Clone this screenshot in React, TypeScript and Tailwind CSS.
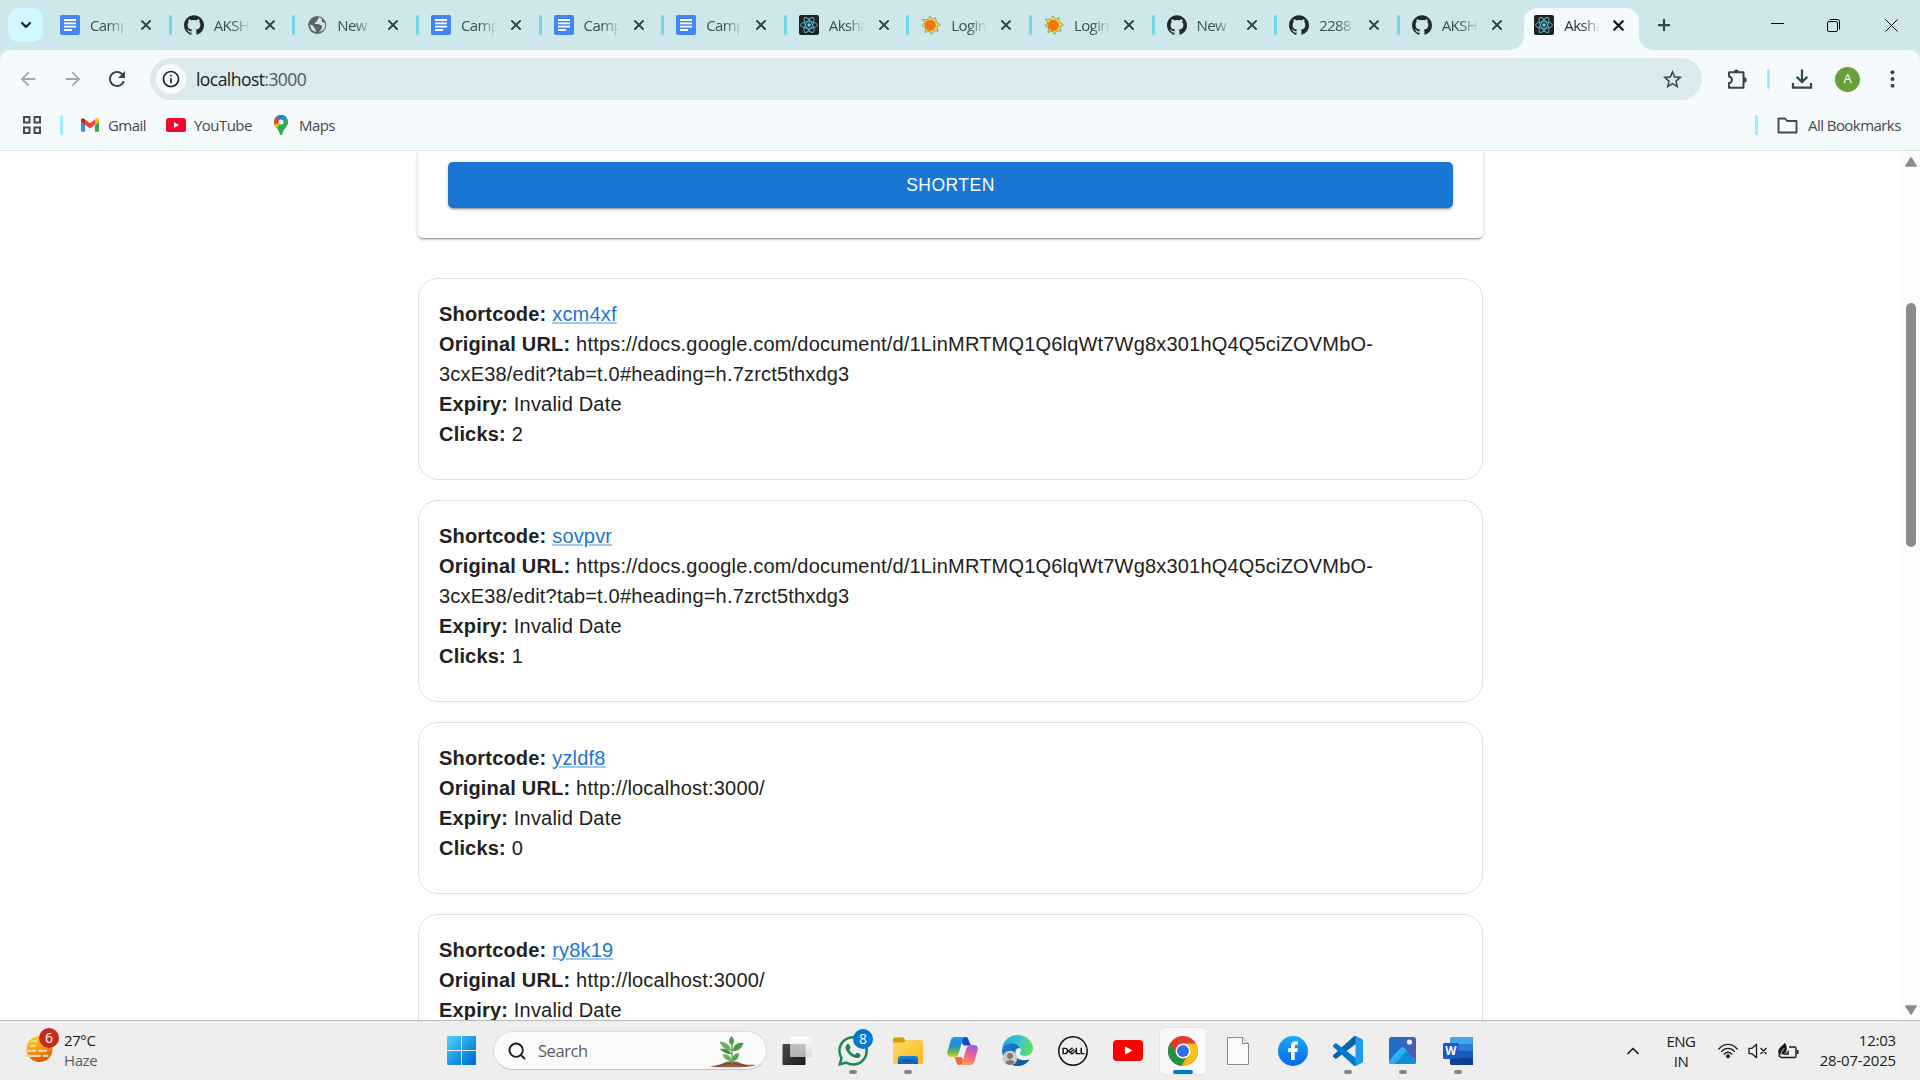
import React from "react";
import { SiGithub, SiDell, SiWhatsapp } from "react-icons/si";
import { MdRefresh, MdInfoOutline, MdStarBorder, MdArrowBack, MdArrowForward } from "react-icons/md";
import { ChevronDown, ChevronUp, X, Plus, Search } from "lucide-react";

/* ---------- favicons ---------- */

const DocsIcon = () => (
  <svg width="20" height="20" viewBox="0 0 20 20">
    <rect width="20" height="20" rx="2" fill="#4285f4" />
    <path d="M4 5h12M4 8.3h12M4 11.7h12M4 15h8" stroke="#fff" strokeWidth="1.8" />
  </svg>
);

const GithubIcon = () => <SiGithub size={20} color="#24292f" />;

const GlobeIcon = () => (
  <svg width="20" height="20" viewBox="0 0 20 20" className="ml-px mr-[-1px]">
    <circle cx="9.2" cy="10" r="9" fill="#5f6368" />
    <path
      d="M10.5 2.3c-.8 1.4.3 1.9-.9 2.6-1 .6-.3 1.6-1.5 2-1.4.4-1.8 1.300-.6 2 1.200.6 2.600-.4 3.900.7 1.100.9 2.400.3 2.800 1.700.3 1.200-.8 1.500-1 2.700-.2 1.300-1.400 2.400-2.900 2.900 4-.2 6.800-3.400 6.800-7 0-1-.200-1.900-.600-2.700-1.100.7-2.300.4-2.700-.600-.3-.9.6-1.300.2-2.200-.6-1.200-2-1.900-3.500-2.100zM2.100 9.700c0 3.600 2.500 6.600 6 7.200.3-1.400-.9-1.700-1-3-.1-1.300-1.400-1.100-1.600-2.400-.2-1-1.900-1.300-3.400-1.800z"
      fill="#d6e8ea"
    />
  </svg>
);

const ReactIcon = () => (
  <svg width="20" height="20" viewBox="0 0 20 20">
    <rect width="20" height="20" rx="2" fill="#222" />
    <g fill="none" stroke="#53c1de" strokeWidth="0.9">
      <ellipse cx="10" cy="10" rx="8.400" ry="3.300" />
      <ellipse cx="10" cy="10" rx="8.400" ry="3.300" transform="rotate(60 10 10)" />
      <ellipse cx="10" cy="10" rx="8.400" ry="3.300" transform="rotate(120 10 10)" />
    </g>
    <circle cx="10" cy="10" r="1.700" fill="#61dafb" />
  </svg>
);

const SunIcon = () => (
  <svg width="20" height="20" viewBox="0 0 20 20">
    <path
      d="M9 1l2.200 3.200L14.800 2.700l.2 4 4.300 3.100-3.500 1.900 1.300 4.300-4-.2-2.700 3.500-1.900-3.400-4.600 1.700.9-4.600L.7 10.500l3.400-2.300L1.500 4.300l4.800.5z"
      fill="#f9dc48"
      stroke="#7d7f58"
      strokeWidth=".7"
      strokeLinejoin="round"
    />
    <circle cx="9.300" cy="10.300" r="5.300" fill="#ee7614" stroke="#d4730f" strokeWidth=".5" />
  </svg>
);

/* ---------- toolbar icons ---------- */

const PuzzleIcon = () => (
  <svg width="22" height="22" viewBox="0 0 22 22" fill="none">
    <path
      d="M3 4.200h14.500v15.600H3v-4.800c3.800-.4 3.800-6.200 0-6.600z"
      stroke="#2f4a52"
      strokeWidth="2"
      strokeLinejoin="round"
    />
    <path d="M7.700 4a2.600 2.600 0 015.200 0zM18 9.200a2.700 2.700 0 010 5.400z" fill="#2f4a52" />
  </svg>
);

const DownloadIcon = () => (
  <svg width="22" height="22" viewBox="0 0 22 22" fill="none" stroke="#2f4a52" strokeWidth="2.300">
    <path d="M11 1.500v12M5.700 8.700l5.300 5.300 5.300-5.300M2 15v4.600h18V15" />
  </svg>
);

const AppsIcon = () => (
  <svg width="18" height="18" viewBox="0 0 18 18" fill="none" stroke="#474747" strokeWidth="2">
    <path d="M1 1h5.500v5.500H1zM11.500 1H17v5.500h-5.500zM1 11.500h5.500V17H1zM11.500 11.500H17V17h-5.500z" />
  </svg>
);

const GmailIcon = () => (
  <svg width="18" height="14" viewBox="52 42 88 66">
    <path fill="#4285f4" d="M58 108h14V74L52 59v43c0 3.320 2.690 6 6 6" />
    <path fill="#34a853" d="M120 108h14c3.320 0 6-2.690 6-6V59l-20 15" />
    <path fill="#fbbc04" d="M120 48v26l20-15v-8c0-7.420-8.470-11.650-14.400-7.200" />
    <path fill="#ea4335" d="M72 74V48l24 18 24-18v26L96 92" />
    <path fill="#c5221f" d="M52 51v8l20 15V48l-5.600-4.200c-5.940-4.450-14.400-.22-14.400 7.200" />
  </svg>
);

const YoutubeIcon = ({ w, color }: { w: number; color: string }) => (
  <svg width={w} height={w * 0.7} viewBox="0 0 20 14">
    <rect width="20" height="14" rx="2.600" fill={color} />
    <path d="M8 4.200v5.600l5-2.800z" fill="#fff" />
  </svg>
);

const MapsIcon = () => (
  <svg width="14" height="20" viewBox="0 0 14 20">
    <defs>
      <clipPath id="pin">
        <path d="M7 0a7 7 0 017 7c0 4.500-4.500 6-5.800 11.500C8 19.500 7.600 20 7 20s-1-.5-1.200-1.500C4.500 13 0 11.500 0 7a7 7 0 017-7z" />
      </clipPath>
    </defs>
    <g clipPath="url(#pin)">
      <path d="M0 0h14v20H0z" fill="#34a853" />
      <path d="M0 14L13 0 0-2z" fill="#ea4335" />
      <path d="M2 2L7 7l7-6V-1H3z" fill="#4285f4" />
      <path d="M7 7l6.500-5.500L14 5 2.500 15 0 10z" fill="#fbbc04" />
      <path d="M7 7l7-6v20H7L3 13z" fill="#34a853" />
      <path d="M7 7L2 2l3-3h6l2 3z" fill="#2f7de9" />
    </g>
    <circle cx="7" cy="7" r="2.500" fill="#fff" />
  </svg>
);

const FolderOutline = () => (
  <svg width="21" height="17" viewBox="0 0 21 17" fill="none" stroke="#474747" strokeWidth="1.900" strokeLinejoin="round">
    <path d="M1.500 1.500H8l2 2.500h9.500v11.500h-18z" />
  </svg>
);

/* ---------- taskbar icons ---------- */

const WeatherIcon = () => (
  <svg width="30" height="28" viewBox="0 0 30 28">
    <defs>
      <linearGradient id="haze" x1="0" y1="0" x2="0.300" y2="1">
        <stop offset="0" stopColor="#fde00a" />
        <stop offset=".45" stopColor="#fbab12" />
        <stop offset="1" stopColor="#e4570c" />
      </linearGradient>
    </defs>
    <circle cx="15.500" cy="14" r="13" fill="url(#haze)" />
    <g stroke="#e6d6a8" strokeWidth="2.200" strokeLinecap="round">
      <path d="M8 6h4M7 11h4M2 15.800h9M15 15.800h7M2 20.800h14M19.500 20.800h4" />
    </g>
  </svg>
);

const WindowsIcon = () => (
  <svg width="29" height="29" viewBox="0 0 29 29">
    <defs>
      <linearGradient id="win" x1="0" y1="0" x2="1" y2="1">
        <stop offset="0" stopColor="#4fd5ff" />
        <stop offset=".6" stopColor="#1390e0" />
        <stop offset="1" stopColor="#0069cf" />
      </linearGradient>
    </defs>
    <path
      d="M1 0h13v14H0V1a1 1 0 011-1zM15 0h13a1 1 0 011 1v13H15zM0 15h14v14H1a1 1 0 01-1-1zM15 15h14v13a1 1 0 01-1 1H15z"
      fill="url(#win)"
    />
  </svg>
);

const PlantIcon = () => (
  <svg width="46" height="32" viewBox="0 0 46 32">
    <path d="M0 30.500c5-1 9-1.200 13-3.200 3-1.800 6-2 9-2 4 0 7 .8 10 2.500 4 1.200 9 1 14 1.200-6 2-12 2.300-22 2.300-9 0-17 .2-24-.8z" fill="#9a6047" />
    <path d="M7 30c6-.8 8-2.500 14-2.500 7 0 10 2 16 2.200" fill="none" stroke="#6e3d2a" strokeWidth="1" />
    <path d="M22 28V6" stroke="#55a24c" strokeWidth="1.400" fill="none" />
    <g fill="#4fa24c">
      <path d="M21.500 9c-4-2.500-2.500-6 0-9 3 3 4 6.500 0 9z" />
      <path d="M21.500 15C17 15 12 11.500 9.500 5.500c6 .5 10.500 3 12 9.500z" fill="#66b55c" />
      <path d="M22.500 15c1-6 5-9 11-8-2 6-6 8.500-11 8z" fill="#4a9a49" />
      <path d="M21.500 18C17 18.500 13 16 10 13c5-1 9 .5 11.500 5z" fill="#3f8f42" />
      <path d="M21.500 25c-4.500 0-7.500-2.500-9-6.500 5-1 8.500 1.500 9 6.500z" fill="#66b55c" />
      <path d="M22.500 25c-.5-5 2-7.500 6.500-8 0 4.500-2 7.500-6.500 8z" fill="#51a54e" />
    </g>
  </svg>
);

const TaskViewIcon = () => (
  <svg width="31" height="28" viewBox="0 0 31 28">
    <defs>
      <linearGradient id="tv1" x1="0" y1="0" x2="1" y2="1">
        <stop offset="0" stopColor="#4b4b4b" />
        <stop offset="1" stopColor="#1b1b1b" />
      </linearGradient>
      <linearGradient id="tv2" x1="0" y1="0" x2="0" y2="1">
        <stop offset="0" stopColor="#fff" />
        <stop offset="1" stopColor="#d9d9d9" />
      </linearGradient>
    </defs>
    <rect x="0.500" y="7" width="23" height="21" rx="1" fill="url(#tv1)" />
    <rect x="8" y="0" width="22" height="20" rx="1" fill="url(#tv2)" opacity=".93" />
    <path d="M8 7h15.500v13H8z" fill="#888" opacity=".4" />
  </svg>
);

const FolderIcon = () => (
  <svg width="30" height="28" viewBox="0 0 30 28">
    <defs>
      <linearGradient id="fold" x1="0" y1="0" x2="1" y2="1">
        <stop offset="0" stopColor="#ffdc68" />
        <stop offset="1" stopColor="#fcb716" />
      </linearGradient>
      <linearGradient id="fold2" x1="0" y1="0" x2="0" y2="1">
        <stop offset="0" stopColor="#1a86dc" />
        <stop offset="1" stopColor="#0b62b5" />
      </linearGradient>
    </defs>
    <path d="M0 2a1.500 1.500 0 011.500-1.500H10l3 3H29v6H0z" fill="#dc9b04" />
    <path d="M0 5.500h10.500L13 3.500h16a1 1 0 011 1V27H0z" fill="url(#fold)" />
    <path d="M5 27v-5a3 3 0 013-3h14a3 3 0 013 3v5z" fill="url(#fold2)" />
    <path d="M9 23.500h12" stroke="#0b4f94" strokeWidth="1.400" />
  </svg>
);

const CopilotIcon = () => (
  <svg width="31" height="28" viewBox="0 0 31 28">
    <defs>
      <linearGradient id="cpA" x1="0.300" y1="0" x2="0.300" y2="1">
        <stop offset="0" stopColor="#1c9be8" />
        <stop offset=".4" stopColor="#1f8ed8" />
        <stop offset=".75" stopColor="#62bb50" />
        <stop offset="1" stopColor="#f0c92a" />
      </linearGradient>
      <linearGradient id="cpB" x1="0.700" y1="0" x2="0.300" y2="1">
        <stop offset="0" stopColor="#a05bea" />
        <stop offset=".45" stopColor="#ee5b93" />
        <stop offset="1" stopColor="#ffa25c" />
      </linearGradient>
    </defs>
    <path d="M18 0c3 0 3.500 2 4.500 5.500.5 2 1.500 3 3.500 3h-9L12 3z" fill="#1846c9" />
    <path d="M8 0h11c-3 0-3.500 3-4.500 6.500l-2.500 9C11 18.500 10 20 6.500 20H4c-3 0-4.500-2-3.500-5.500l3-10.500C4.300 1.500 5.500 0 8 0z" fill="url(#cpA)" />
    <path d="M13 28c-3 0-3.500-2-4.500-5.500C8 20.500 7.500 20 6 20h8l5 5z" fill="#f16a3c" />
    <path d="M23 28H12c3 0 3.500-3 4.500-6.500l2.500-9C20 9.500 21 8 24.500 8H27c3 0 4.500 2 3.500 5.500l-3 10.500c-.8 2.500-2 4-4.500 4z" fill="url(#cpB)" />
  </svg>
);

const EdgeIcon = () => (
  <svg width="31" height="31" viewBox="0 0 31 31">
    <defs>
      <linearGradient id="edA" x1="0" y1="0.300" x2="1" y2="0.500">
        <stop offset="0" stopColor="#1f9fe0" />
        <stop offset=".5" stopColor="#32c6d6" />
        <stop offset="1" stopColor="#62dd62" />
      </linearGradient>
      <linearGradient id="edB" x1="0" y1="0" x2="1" y2="1">
        <stop offset="0" stopColor="#1a86d8" />
        <stop offset="1" stopColor="#124b96" />
      </linearGradient>
    </defs>
    <path d="M0 15C1 9 6 8 10 8c6 0 9 4 8.500 8-3-1-5 0-5 3 0 4 5 8 14 5.500C25 28.500 21 31 15.500 31 7 31 0 24 0 15z" fill="url(#edB)" />
    <path d="M0 15.500C0 7 7 0 15.500 0 24 0 31 6 31 13.500c0 4.500-3.500 7.500-8 7.500-3.500 0-5.500-1-5.500-2.300 0-1 1.300-1.700 1.300-3.700C18.800 11 15 8 10.500 8 5 8 .5 11 0 15.500z" fill="url(#edA)" />
    <path d="M13.500 17c0-3 2-4.500 4.500-3.500 1 .5 1.300 1.500 0 3.500-1 1.500 0 3 2.500 3.800-4 .7-7-1-7-3.800z" fill="#f1f6f8" />
    <circle cx="8" cy="23" r="7.300" fill="#cfcdca" />
    <circle cx="8" cy="21" r="3" fill="#7f7a76" />
    <path d="M3.500 28c0-4 9-4 9 0-2.500 2.500-6.500 2.500-9 0z" fill="#7f7a76" />
  </svg>
);

const ChromeIcon = () => (
  <svg width="30" height="30" viewBox="0 0 48 48">
    <circle cx="24" cy="24" r="24" fill="#e33b2e" />
    <path d="M24 12h20.780A24 24 0 0124 48l10.400-18z" fill="#fbc116" />
    <path d="M3.200 12L13.600 30 24 36l4-1-6.500 12.900A24 24 0 013.200 12z" fill="#229342" />
    <path d="M34.400 30L24 48l-2.400-.1L30 33z" fill="#fbc116" />
    <circle cx="24" cy="24" r="12" fill="#fff" />
    <circle cx="24" cy="24" r="9.500" fill="#2f6fe8" />
  </svg>
);

const FileIcon = () => (
  <svg width="22" height="28" viewBox="0 0 22 28">
    <path d="M.5.500h15l6 6v21H.500z" fill="#fafafa" stroke="#8a8a8a" />
    <path d="M15.500.500v6h6" fill="#e8e8e8" stroke="#8a8a8a" />
  </svg>
);

const FacebookIcon = () => (
  <svg width="30" height="30" viewBox="0 0 30 30">
    <defs>
      <linearGradient id="fb" x1="0" y1="0" x2="0" y2="1">
        <stop offset="0" stopColor="#19a9fc" />
        <stop offset="1" stopColor="#0667e8" />
      </linearGradient>
    </defs>
    <circle cx="15" cy="15" r="15" fill="url(#fb)" />
    <path d="M13 24v-8h-3v-3.800h3V10c0-3.200 1.800-4.700 4.500-4.700.9 0 1.800.1 2.500.2v3.300h-1.600c-1.300 0-1.700.7-1.700 1.700v1.700h3.200l-.6 3.800h-2.600v8z" fill="#fff" />
  </svg>
);

const VscodeIcon = () => (
  <svg width="30" height="30" viewBox="0 0 100 100">
    <path d="M96.500 10.700L75.900.800a6.200 6.200 0 00-7.100 1.200L1.300 63.500a4.200 4.200 0 000 6.200l5.500 5a4.200 4.200 0 005.300.2L93.400 13.300A4.100 4.100 0 01100 16.500v-.2a6.200 6.200 0 00-3.500-5.600z" fill="#0065a9" />
    <path d="M96.500 89.300L75.900 99.200a6.200 6.200 0 01-7.100-1.200L1.300 36.500a4.200 4.200 0 010-6.200l5.500-5a4.200 4.200 0 015.300-.2l81.300 61.600a4.100 4.100 0 006.600-3.200v.2a6.200 6.200 0 01-3.500 5.600z" fill="#007acc" />
    <path d="M75.900 99.200a6.200 6.200 0 01-7.100-1.200c2.300 2.300 6.200.700 6.200-2.600V4.600c0-3.300-3.900-4.900-6.200-2.600a6.200 6.200 0 017.100-1.200l20.600 9.900a6.200 6.200 0 013.500 5.600v67.400a6.200 6.200 0 01-3.500 5.600z" fill="#1f9cf0" />
  </svg>
);

const PhotosIcon = () => (
  <svg width="27" height="27" viewBox="0 0 27 27">
    <defs>
      <linearGradient id="ph" x1="0" y1="0.300" x2="1" y2="0.600">
        <stop offset="0" stopColor="#1173cf" />
        <stop offset="1" stopColor="#5b55a8" />
      </linearGradient>
      <linearGradient id="ph2" x1="0" y1="0" x2="1" y2="1">
        <stop offset="0" stopColor="#45d3fb" />
        <stop offset="1" stopColor="#128ad8" />
      </linearGradient>
      <clipPath id="phc">
        <rect width="27" height="27" rx="2.500" />
      </clipPath>
    </defs>
    <g clipPath="url(#phc)">
      <rect width="27" height="27" fill="url(#ph)" />
      <path d="M-1 24L11.500 11.200a3 3 0 014 0L28 24v4H-1z" fill="#128ad8" />
      <path d="M-1 25L11.500 11.200a3 3 0 014 0L18 14 5 28h-6z" fill="url(#ph2)" />
    </g>
    <circle cx="20.500" cy="5" r="2.600" fill="#f2f4fb" />
  </svg>
);

const WordIcon = () => (
  <svg width="30" height="28" viewBox="0 0 30 28">
    <path d="M7 1.500A1.500 1.500 0 018.500 0H30v7H7z" fill="#41a5ee" />
    <path d="M7 7h23v7H7z" fill="#2b7cd3" />
    <path d="M7 14h23v7H7z" fill="#185abd" />
    <path d="M7 21h23v7H8.500A1.500 1.500 0 017 26.500z" fill="#103f91" />
    <rect y="6" width="15.500" height="16" rx="1.500" fill="#185abd" />
    <text x="7.700" y="18" textAnchor="middle" fontSize="11.500" fontWeight="700" fill="#fff" fontFamily="Open Sans, sans-serif">
      W
    </text>
  </svg>
);

const WifiIcon = () => (
  <svg width="20" height="16" viewBox="0 0 20 16" fill="none" stroke="#1b1b1b" strokeWidth="1.300" strokeLinecap="round">
    <path d="M.8 6C6-.3 14-.3 19.200 6M3.500 8.600c3.600-4.300 9.400-4.300 13 0M6.200 11.200c2.200-2.600 5.400-2.600 7.600 0" />
    <circle cx="10" cy="13.300" r="1.300" fill="#1b1b1b" />
  </svg>
);

const MuteIcon = () => (
  <svg width="20" height="16" viewBox="0 0 20 16" fill="none" stroke="#1b1b1b" strokeWidth="1.300" strokeLinejoin="round">
    <path d="M1 5.300h3L8.500 1.300v13.400L4 10.700H1zM12.500 5l6 6M18.500 5l-6 6" />
  </svg>
);

const BatteryIcon = () => (
  <svg width="21" height="18" viewBox="0 0 21 18" fill="none">
    <path d="M11 5h5.500a1.500 1.500 0 011.500 1.500v7.500a1.500 1.500 0 01-1.500 1.500H3.500a1.500 1.500 0 01-1.500-1.500" stroke="#1b1b1b" strokeWidth="1.400" />
    <path d="M18.800 8h1a.8.8 0 01.8.8v2.400a.8.8 0 01-.8.8h-1z" fill="#1b1b1b" />
    <path d="M5 13h6V8z" fill="#4a4a4a" />
    <path d="M.3 14.500C1.500 12.500 0 11 .3 8.800.7 5.500 3.800 5 6.800.8 9 4 9.300 6.800 8.300 9.300 7.300 11.800 5 12.800 2.800 12.200L1.300 14.800z" fill="#1b1b1b" />
    <path d="M2.500 12.500C3.500 10 4.800 8 6.300 6" stroke="#eee" strokeWidth=".8" />
  </svg>
);

/* ---------- browser chrome ---------- */

type Tab = { icon: React.ReactNode; title: string; wide?: boolean };

const tabs: Tab[] = [
  { icon: <DocsIcon />, title: "Camp", wide: true },
  { icon: <GithubIcon />, title: "AKSH", wide: true },
  { icon: <GlobeIcon />, title: "New T", wide: true },
  { icon: <DocsIcon />, title: "Camp" },
  { icon: <DocsIcon />, title: "Camp" },
  { icon: <DocsIcon />, title: "Camp" },
  { icon: <ReactIcon />, title: "Aksha" },
  { icon: <SunIcon />, title: "Login" },
  { icon: <SunIcon />, title: "Login" },
  { icon: <GithubIcon />, title: "New" },
  { icon: <GithubIcon />, title: "22881" },
  { icon: <GithubIcon />, title: "AKSH" },
];

const TabTitle = ({ children }: { children: string }) => (
  <span className="ml-[10px] w-[36px] overflow-hidden whitespace-nowrap text-[15px] leading-5 tracking-[-0.6px] [mask-image:linear-gradient(to_right,black_50%,transparent)]">
    {children}
  </span>
);

const TabStrip = () => (
  <div className="flex h-[50px] bg-[#cee7eb]">
    <div className="ml-2 mt-2 flex h-[34px] w-[35px] items-center justify-center rounded-[11px] bg-[#d1f7ff]">
      <ChevronDown size={16} strokeWidth={3.2} color="#101d20" />
    </div>
    <div className="ml-[5px] flex">
      {tabs.map((t, i) => (
        <div
          key={i}
          className={`flex h-[50px] shrink-0 items-center pl-3 text-[#3b5056] ${t.wide ? "w-[123.67px]" : "w-[122.6px]"}`}
        >
          {t.icon}
          <TabTitle>{t.title}</TabTitle>
          <X size={16} strokeWidth={3} className={`text-[#2f4950] ${t.wide ? "ml-[12px]" : "ml-[11px]"}`} />
          {i < 11 && <span className="ml-auto h-5 w-[3px] rounded bg-[#72d7e8]" />}
        </div>
      ))}
    </div>
    <div className="relative ml-[2px] mt-2 flex h-[42px] w-[115px] shrink-0 items-center rounded-t-[13px] bg-[#f5fafc] pb-2 pl-[10px] text-[#20343a]">
      <span className="absolute bottom-0 left-[-14px] h-[14px] w-[14px] bg-[radial-gradient(circle_at_0_0,transparent_13.5px,#f5fafc_14px)]" />
      <span className="absolute bottom-0 right-[-14px] h-[14px] w-[14px] bg-[radial-gradient(circle_at_100%_0,transparent_13.5px,#f5fafc_14px)]" />
      <ReactIcon />
      <TabTitle>Aksha</TabTitle>
      <X size={17} strokeWidth={3.2} className="ml-[10px] text-[#101d20]" />
    </div>
    <div className="ml-[16px] flex h-[50px] items-center">
      <Plus size={18} strokeWidth={3} color="#2f4950" />
    </div>
    <div className="ml-auto flex h-[50px] items-center pr-[22px] text-black">
      <span className="mb-[3px] mr-[43px] h-px w-[13px] bg-black" />
      <svg width="13" height="13" viewBox="0 0 13 13" fill="none" stroke="currentColor" className="mr-[45px]">
        <rect x=".5" y="2.500" width="10" height="10" rx="1.500" />
        <path d="M2.500.500h8a2 2 0 012 2v8" />
      </svg>
      <svg width="13" height="13" viewBox="0 0 13 13" stroke="currentColor">
        <path d="M.5.500l12 12M12.500.500l-12 12" />
      </svg>
    </div>
  </div>
);

const Toolbar = () => (
  <div className="flex h-[58px] items-center bg-[#f5fafc]">
    <MdArrowBack size={22} color="#9fabae" className="ml-[17px]" />
    <MdArrowForward size={22} color="#9fabae" className="ml-[23px]" />
    <MdRefresh size={24} color="#2f4a52" className="ml-[21px]" />
    <div className="ml-[21px] flex h-[42px] w-[1552px] items-center rounded-full bg-[#dbeaee]">
      <div className="ml-[6px] flex h-[30px] w-[30px] items-center justify-center rounded-full bg-[#f5fafc]">
        <MdInfoOutline size={20} color="#1c2123" />
      </div>
      <span className="ml-[10px] text-[17.5px] tracking-[-0.55px] text-[#171d1f]">
        localhost<span className="text-[#4c5a5f]">:3000</span>
      </span>
      <MdStarBorder size={23} color="#3f4749" className="ml-auto mr-[18px]" />
    </div>
    <div className="ml-[24px]">
      <PuzzleIcon />
    </div>
    <span className="ml-[19px] h-5 w-[3px] rounded bg-[#9beeff]" />
    <div className="ml-[21px]">
      <DownloadIcon />
    </div>
    <div className="ml-[22px] flex h-[25px] w-[25px] items-center justify-center rounded-full bg-[#689f38] text-[13px] text-white">
      A
    </div>
    <svg width="5" height="18" viewBox="0 0 5 18" fill="#2f4a52" className="ml-[30px]">
      <circle cx="2.500" cy="2.200" r="2" />
      <circle cx="2.500" cy="9" r="2" />
      <circle cx="2.500" cy="15.800" r="2" />
    </svg>
  </div>
);

const BookmarksBar = () => (
  <div className="flex h-[43px] items-center border-b border-[#d9e5e8] bg-[#f5fafc] pb-[8px] text-[15px] tracking-[-0.55px] text-[#474747]">
    <div className="ml-[23px]">
      <AppsIcon />
    </div>
    <span className="ml-[19px] h-5 w-[3px] rounded bg-[#9beeff]" />
    <div className="ml-[18px] flex w-[85px] items-center gap-[9px]">
      <GmailIcon />
      <span>Gmail</span>
    </div>
    <div className="flex w-[108px] items-center gap-[8px]">
      <YoutubeIcon w={20} color="#ff0033" />
      <span>YouTube</span>
    </div>
    <div className="flex items-center gap-[11px]">
      <MapsIcon />
      <span>Maps</span>
    </div>
    <span className="ml-auto mr-[19px] h-5 w-[3px] rounded bg-[#9beeff]" />
    <FolderOutline />
    <span className="ml-[10px] mr-[18px] w-[94px] whitespace-nowrap">All Bookmarks</span>
  </div>
);

/* ---------- page ---------- */

const longUrl =
  "https://docs.google.com/document/d/1LinMRTMQ1Q6lqWt7Wg8x301hQ4Q5ciZOVMbO-3cxE38/edit?tab=t.0#heading=h.7zrct5thxdg3";

const links = [
  { code: "xcm4xf", url: longUrl, clicks: 2 },
  { code: "sovpvr", url: longUrl, clicks: 1 },
  { code: "yzldf8", url: "http://localhost:3000/", clicks: 0 },
  { code: "ry8k19", url: "http://localhost:3000/", clicks: 0 },
];

const Page = () => (
  <div className="flex h-[869px] overflow-hidden bg-white">
    <main className="flex w-[1901px] flex-col items-center font-['Liberation_Sans',Arial,sans-serif] text-[20px] leading-[30px] tracking-[0.1876px] text-[#212121]">
      <div className="h-[87px] w-[1065px] shrink-0 rounded-b-[5px] px-[30px] pt-[11px] shadow-[0_3px_1px_-2px_rgba(0,0,0,0.2),0_2px_2px_rgba(0,0,0,0.14),0_1px_5px_rgba(0,0,0,0.12)]">
        <button className="block h-[46px] w-full rounded-[5px] bg-[#1976d2] text-[17.5px] tracking-[0.5px] text-white shadow-[0_3px_1px_-2px_rgba(0,0,0,0.2),0_2px_2px_rgba(0,0,0,0.14),0_1px_5px_rgba(0,0,0,0.12)]">
          SHORTEN
        </button>
      </div>
      <div className="mt-10 flex w-[1065px] shrink-0 flex-col gap-5">
        {links.map((l) => (
          <div key={l.code} className="rounded-[20px] border border-[#e0e0e0] px-5 pb-[30px] pt-5">
            <p>
              <strong>Shortcode:</strong>{" "}
              <a className="text-[#1976d2] underline decoration-[#1976d2]/40 underline-offset-auto">{l.code}</a>
            </p>
            <p>
              <strong>Original URL:</strong> {l.url}
            </p>
            <p>
              <strong>Expiry:</strong> Invalid Date
            </p>
            <p>
              <strong>Clicks:</strong> {l.clicks}
            </p>
          </div>
        ))}
      </div>
    </main>
    <div className="flex w-[19px] flex-col items-center bg-[#fcfcfc]">
      <svg width="12" height="10" viewBox="0 0 12 10" className="mt-[6px]">
        <path d="M6 1l5 8H1z" fill="#8b8b8b" stroke="#8b8b8b" strokeWidth="1.600" strokeLinejoin="round" />
      </svg>
      <div className="mt-[136px] h-[244px] w-[10px] rounded-full bg-[#8b8b8b]" />
      <svg width="12" height="10" viewBox="0 0 12 10" className="mb-[5px] mt-auto">
        <path d="M6 9l5-8H1z" fill="#8b8b8b" stroke="#8b8b8b" strokeWidth="1.600" strokeLinejoin="round" />
      </svg>
    </div>
  </div>
);

/* ---------- taskbar ---------- */

type TaskbarApp = { icon: React.ReactNode; running?: boolean; active?: boolean; badge?: string };

const apps: TaskbarApp[] = [
  { icon: <TaskViewIcon /> },
  { icon: <SiWhatsapp size={30} color="#1b8755" />, running: true, badge: "8" },
  { icon: <FolderIcon />, running: true },
  { icon: <CopilotIcon /> },
  { icon: <EdgeIcon /> },
  { icon: <SiDell size={30} color="#111" /> },
  { icon: <YoutubeIcon w={30} color="#ff0000" /> },
  { icon: <ChromeIcon />, active: true },
  { icon: <FileIcon /> },
  { icon: <FacebookIcon /> },
  { icon: <VscodeIcon />, running: true },
  { icon: <PhotosIcon />, running: true },
  { icon: <WordIcon />, running: true },
];

const Taskbar = () => (
  <div className="flex h-[60px] border-t border-[#bababa] bg-[#eeeeee] text-[15px] leading-5 text-[#1b1b1b]">
    <div className="flex w-[447px] pl-[24px]">
      <div className="relative mt-[14px] h-[28px] w-[30px]">
        <WeatherIcon />
        <span className="absolute left-[15px] top-[-7px] flex h-5 w-5 items-center justify-center rounded-full bg-[#c42b1c] text-[14px] text-white">
          6
        </span>
      </div>
      <div className="ml-[10px] mt-[9px] text-[15px] tracking-[-0.4px]">
        <div>27°C</div>
        <div className="text-[#5c5c5c]">Haze</div>
      </div>
    </div>
    <div className="mt-[15px]">
      <WindowsIcon />
    </div>
    <div className="ml-[17px] mt-[10px] flex h-[39px] w-[274px] items-center rounded-full border border-b-[#c4c4c4] border-[#dcdcdc] bg-[#fafafa] pl-[13px]">
      <Search size={20} strokeWidth={2.3} color="#222" />
      <span className="ml-[11px] text-[16.5px] tracking-[-0.45px] text-[#5c5c5c]">Search</span>
      <div className="ml-auto mr-[10px] mt-[3px]">
        <PlantIcon />
      </div>
    </div>
    <div className="ml-[3px] flex">
      {apps.map((a, i) => (
        <div key={i} className="relative flex h-[59px] w-[55px] items-center justify-center">
          <div
            className={
              a.active
                ? "flex h-12 w-12 items-center justify-center rounded-[5px] border border-[#e4e4e4] bg-[#f9f9f9]"
                : "flex"
            }
          >
            {a.icon}
          </div>
          {a.running && <span className="absolute bottom-[6px] h-1 w-2 rounded-full bg-[#868686]" />}
          {a.active && <span className="absolute bottom-[6px] h-1 w-5 rounded-full bg-[#0078d4]" />}
          {a.badge && (
            <span className="absolute left-[28px] top-[8px] flex h-5 w-5 items-center justify-center rounded-full bg-[#0078d4] text-[14px] text-white">
              {a.badge}
            </span>
          )}
        </div>
      ))}
    </div>
    <div className="ml-auto flex items-center pr-[24px]">
      <ChevronUp size={20} strokeWidth={2} />
      <div className="ml-[23px] w-[30px] text-center text-[15px] tracking-[-0.5px]">
        <div>ENG</div>
        <div>IN</div>
      </div>
      <div className="ml-[22px] flex items-center gap-[10px]">
        <WifiIcon />
        <MuteIcon />
        <BatteryIcon />
      </div>
      <div className="ml-[16px] w-[81px] whitespace-nowrap pb-[2px] text-right text-[15px] tracking-[-0.2px]">
        <div>12:03</div>
        <div>28-07-2025</div>
      </div>
    </div>
  </div>
);

export default function App() {
  return (
    <div className="flex h-[1080px] w-[1920px] flex-col overflow-hidden bg-[#cee7eb] font-['Open_Sans','Noto_Sans',sans-serif]">
      <TabStrip />
      <div className="overflow-hidden rounded-t-[10px]">
        <Toolbar />
        <BookmarksBar />
      </div>
      <Page />
      <Taskbar />
    </div>
  );
}
